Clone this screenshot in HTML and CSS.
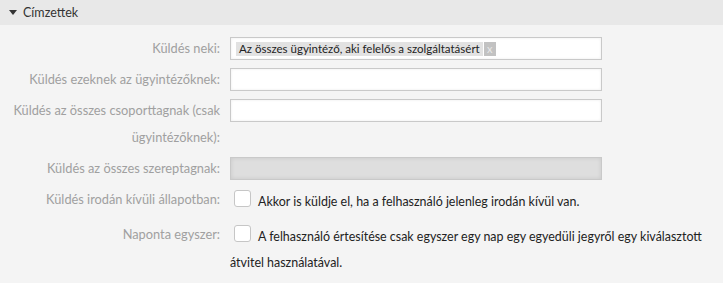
FILE: index.html
```html
<!DOCTYPE html>
<html lang="hu">
<head>
<meta charset="utf-8">
<title>Címzettek</title>
<link rel="stylesheet" href="styles.css">
</head>
<body>
<div class="widget">
  <div class="header">
    <span class="toggle"></span>
    <span class="title">Címzettek</span>
  </div>
  <div class="content">
    <div class="row">
      <div class="label">Küldés neki:</div>
      <div class="field">
        <div class="input">
          <span class="tag"><span class="tag-text">Az összes ügyintéző, aki felelős a szolgáltatásért</span><span class="tag-x">x</span></span>
        </div>
      </div>
    </div>
    <div class="row">
      <div class="label">Küldés ezeknek az ügyintézőknek:</div>
      <div class="field"><div class="input"></div></div>
    </div>
    <div class="row">
      <div class="label label-wrap">Küldés az összes csoporttagnak (csak ügyintézőknek):</div>
      <div class="field"><div class="input"></div></div>
    </div>
    <div class="row">
      <div class="label">Küldés az összes szereptagnak:</div>
      <div class="field"><div class="input disabled"></div></div>
    </div>
    <div class="row">
      <div class="label">Küldés irodán kívüli állapotban:</div>
      <div class="field check-field"><span class="checkbox"></span>Akkor is küldje el, ha a felhasználó jelenleg irodán kívül van.</div>
    </div>
    <div class="row">
      <div class="label">Naponta egyszer:</div>
      <div class="field check-field"><span class="checkbox"></span>A felhasználó értesítése csak egyszer egy nap egy egyedüli jegyről egy kiválasztott átvitel használatával.</div>
    </div>
  </div>
</div>
</body>
</html>
```

FILE: styles.css
```css
html, body {
  margin: 0;
  padding: 0;
  background: #f4f4f4;
}
body {
  font-family: "Lato", "Liberation Sans", sans-serif;
  font-size: 12.8px;
  color: #333;
}
.widget {
  width: 723px;
}
.header {
  height: 25px;
  background: #e8e8e8;
  display: flex;
  align-items: center;
  padding-left: 9px;
  box-sizing: border-box;
}
.toggle {
  width: 0;
  height: 0;
  border-left: 4px solid transparent;
  border-right: 4px solid transparent;
  border-top: 5px solid #333;
  margin-right: 6px;
  margin-top: 0;
}
.title {
  font-size: 12.5px;
  color: #333;
}
.content {
  padding-top: 12px;
  display: flex;
  flex-direction: column;
  gap: 8px;
}
.row {
  display: flex;
}
.label {
  width: 230px;
  padding-right: 10px;
  box-sizing: border-box;
  text-align: right;
  color: #a0a0a0;
  line-height: 23px;
  flex-shrink: 0;
}
.label-wrap {
  line-height: 27px;
  margin-top: -2px;
  margin-bottom: -2px;
}
.field {
  flex: 1;
  padding-right: 10px;
  min-width: 0;
}
.input {
  width: 372px;
  height: 23px;
  box-sizing: border-box;
  border: 1px solid #c9c9c9;
  background: #fff;
  box-shadow: inset 0 0 3px rgba(0,0,0,0.08);
  display: flex;
  align-items: center;
  padding-left: 5px;
}
.input.disabled {
  background: #dedede;
  box-shadow: inset 0 0 4px rgba(0,0,0,0.1);
}
.tag {
  display: flex;
  align-items: stretch;
  height: 14px;
  line-height: 14px;
  font-size: 11.5px;
}
.tag-text {
  background: #e2e2e2;
  padding: 0 3px;
  color: #222;
}
.tag-x {
  background: #c2c2c2;
  color: #e8e8e8;
  width: 12px;
  text-align: center;
  margin-left: 1px;
  font-size: 11px;
}
.check-field {
  line-height: 26px;
  margin-top: 1px;
  font-size: 12.45px;
  color: #222;
}
.checkbox {
  display: inline-block;
  width: 17px;
  height: 17px;
  box-sizing: border-box;
  border: 1px solid #c6c6c6;
  border-radius: 3px;
  background: #fff;
  vertical-align: top;
  margin: 1px 7px 0 4px;
}
```
